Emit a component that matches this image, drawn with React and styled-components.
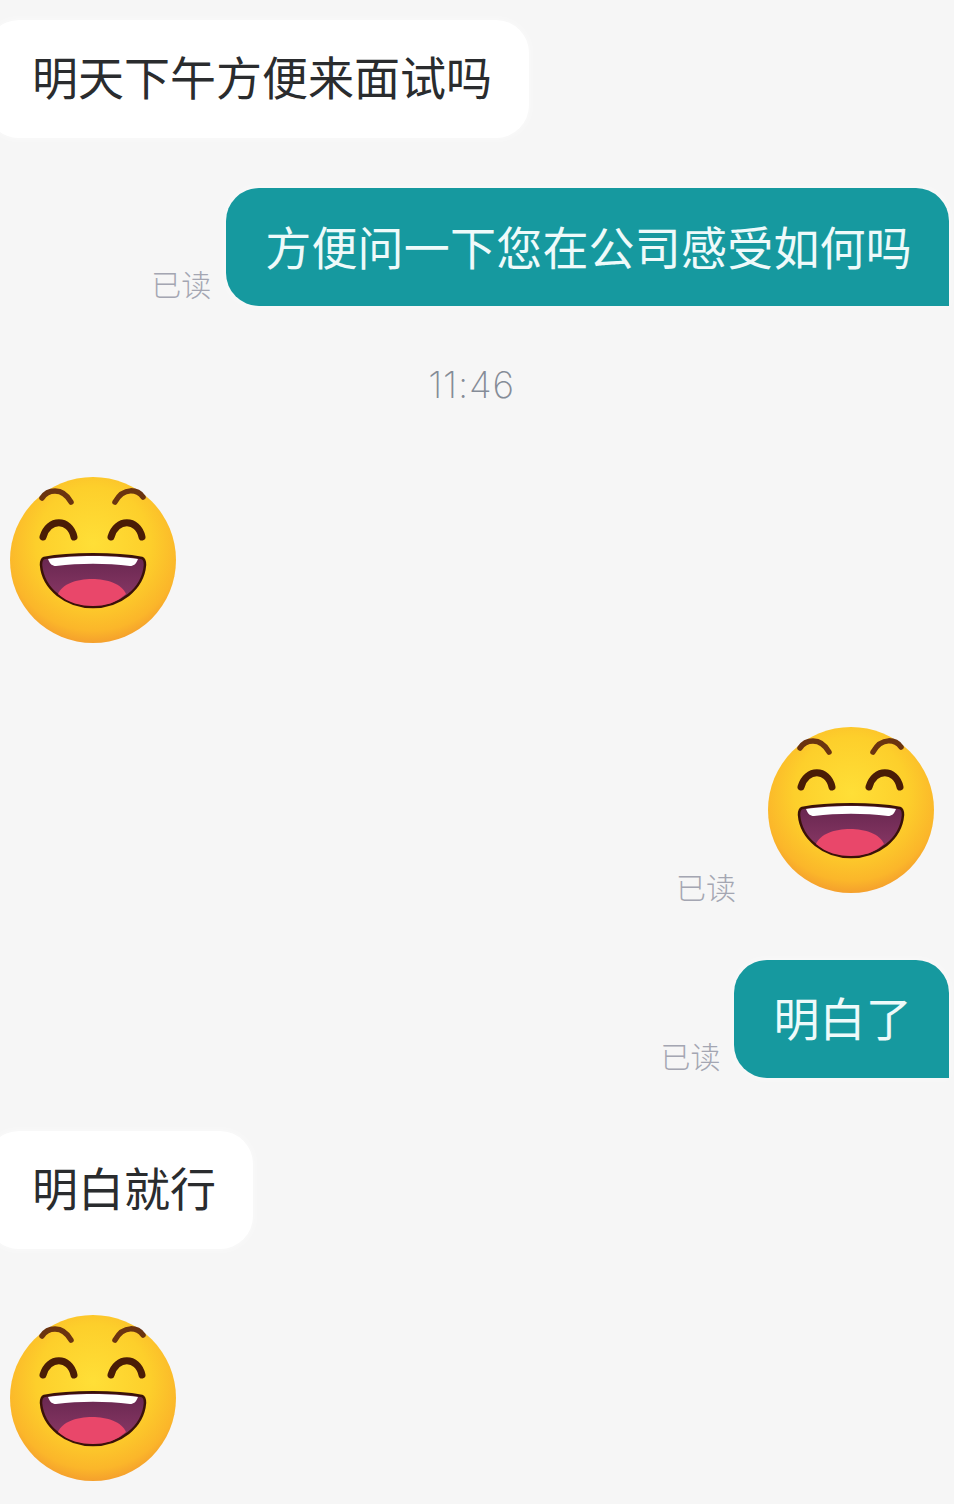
import React from "react";
import styled, { createGlobalStyle } from "styled-components";

const GlobalStyle = createGlobalStyle`
	html, body {
		margin: 0;
		background: #f6f6f6;
	}
	body {
		font-family: "Noto Sans CJK SC", "Liberation Sans", sans-serif;
	}
`;

const Chat = styled.main`
	width: 954px;
	height: 1504px;
	padding-top: 20px;
	box-sizing: border-box;
	overflow: hidden;
	display: flex;
	flex-direction: column;
`;

const Row = styled.section`
	display: flex;
	align-items: flex-end;
	justify-content: ${(p) => (p.$mine ? "flex-end" : "flex-start")};
	margin-top: ${(p) => p.$top || 0}px;
	padding-right: ${(p) => p.$right || 0}px;
	padding-left: ${(p) => p.$left || 0}px;
`;

const Bubble = styled.div`
	height: 118px;
	box-sizing: border-box;
	display: flex;
	align-items: center;
	font-size: 46px;
	line-height: 60px;
	white-space: nowrap;
	letter-spacing: ${(p) => (p.$mine ? "0.2px" : "0")};
	color: ${(p) => (p.$mine ? "#eefafa" : "#2a2c2e")};
	background: ${(p) => (p.$mine ? "#16999f" : "#ffffff")};
	padding: ${(p) => p.$pad || (p.$mine ? "0 37px 5px 39px" : "0 37px 8px 46px")};
	margin-left: ${(p) => (p.$mine ? 0 : -14)}px;
	border-radius: ${(p) => (p.$mine ? "33px 33px 0 33px" : "33px")};
	box-shadow: 0 0 10px rgba(255, 255, 255, 0.6);
`;

const ReadMark = styled.span`
	font-size: 30px;
	line-height: 30px;
	font-weight: 300;
	color: #a4a6b2;
	white-space: nowrap;
	margin-right: ${(p) => p.$gap}px;
	margin-bottom: ${(p) => p.$lift}px;
`;

const TimeStamp = styled.time`
	display: block;
	margin-top: 57px;
	padding-right: 11px;
	text-align: center;
	font-family: "Inter", "Liberation Sans", sans-serif;
	font-size: 37px;
	font-weight: 200;
	line-height: 44px;
	letter-spacing: 0.8px;
	color: #858c97;
`;

const FaceSvg = styled.svg`
	display: block;
	flex-shrink: 0;
`;

const LaughFace = ({ id }) => (
	<FaceSvg width="166" height="166" viewBox="0 0 166 166">
		<defs>
			<radialGradient id={`skin-${id}`} cx="0.5" cy="0.4" r="0.62">
				<stop offset="0" stopColor="#ffdf37" />
				<stop offset="0.55" stopColor="#fdcf2b" />
				<stop offset="0.85" stopColor="#fbb62a" />
				<stop offset="1" stopColor="#f39a2d" />
			</radialGradient>
			<linearGradient id={`mouth-${id}`} x1="0" y1="0" x2="0" y2="1">
				<stop offset="0" stopColor="#66264f" />
				<stop offset="1" stopColor="#8e3a68" />
			</linearGradient>
		</defs>
		<circle cx="83" cy="83" r="83" fill={`url(#skin-${id})`} />
		<g fill="none" strokeLinecap="round">
			<path d="M32 21 C37 13 52 9 61 25" strokeWidth="5.5" stroke="#6b3410" />
			<path d="M105 25 C114 9 128 13 133 20" strokeWidth="5.5" stroke="#6b3410" />
			<path d="M33 60 C38 41 60 41 64 60" strokeWidth="7" stroke="#4a1c06" />
			<path d="M101 60 C106 41 128 41 132 60" strokeWidth="7" stroke="#4a1c06" />
		</g>
		<path d="M34 81 C60 76 106 76 132 81 C135 82 135 85 135 88 C133 112 110 130 83 130 C56 130 33 112 31 88 C31 85 31 82 34 81 Z" fill={`url(#mouth-${id})`} stroke="#3a1208" strokeWidth="2.5" />
		<path d="M38 82 C64 78 102 78 128 82 C126 87 124 89 120 89 C96 86 70 86 46 89 C42 89 40 87 38 82 Z" fill="#ffffff" />
		<path d="M48 117 C56 97 108 97 116 117 C106 126 95 129 83 129 C71 129 58 126 48 117 Z" fill="#e9476a" />
	</FaceSvg>
);

const App = () => {
	return (
		<Chat>
			<GlobalStyle />
			<Row>
				<Bubble>明天下午方便来面试吗</Bubble>
			</Row>
			<Row $mine $top={50} $right={5}>
				<ReadMark $gap={15} $lift={8}>已读</ReadMark>
				<Bubble $mine>方便问一下您在公司感受如何吗</Bubble>
			</Row>
			<TimeStamp>11:46</TimeStamp>
			<Row $top={70} $left={10}>
				<LaughFace id="a" />
			</Row>
			<Row $mine $top={84} $right={20}>
				<ReadMark $gap={32} $lift={-8}>已读</ReadMark>
				<LaughFace id="b" />
			</Row>
			<Row $mine $top={67} $right={5}>
				<ReadMark $gap={14} $lift={8}>已读</ReadMark>
				<Bubble $mine $pad="0 37px 6px 39px">明白了</Bubble>
			</Row>
			<Row $top={53}>
				<Bubble>明白就行</Bubble>
			</Row>
			<Row $top={66} $left={10}>
				<LaughFace id="c" />
			</Row>
		</Chat>
	);
};

export default App;
